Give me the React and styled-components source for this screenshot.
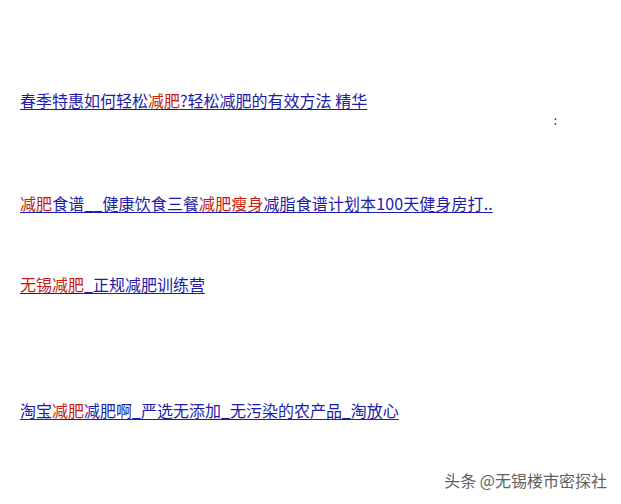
import React from "react";
import styled, { createGlobalStyle } from "styled-components";

const Global = createGlobalStyle`
  html, body {
    margin: 0;
    padding: 0;
    background: #fff;
  }
  body {
    font-family: "Noto Sans CJK SC", "Noto Sans", sans-serif;
  }
`;

const Page = styled.div`
  width: 621px;
  height: 504px;
  position: relative;
  display: flex;
  flex-direction: column;
  padding: 0 20px;
  box-sizing: border-box;
`;

const Line = styled.a`
  display: block;
  width: fit-content;
  margin-top: ${props => props.top}px;
  font-size: 16px;
  line-height: 20px;
  color: #1c1ca8;
  text-decoration: underline;
  text-underline-offset: 2px;
  letter-spacing: ${props => props.spread || 0}px;
  cursor: pointer;
`;

const Hot = styled.span`
  color: #c41a12;
`;

const Dots = styled.div`
  align-self: flex-end;
  margin-right: 44px;
  font-size: 12px;
  line-height: 12px;
  color: #1c1ca8;
  margin-top: 4px;
`;

const Mark = styled.div`
  position: absolute;
  right: 14px;
  bottom: 12px;
  font-size: 16px;
  color: #5f5f5f;
`;

export default function App() {
  return (
    <Page>
      <Global />
      <Line top={90}>
        春季特惠如何轻松<Hot>减肥</Hot>?轻松减肥的有效方法 精华
      </Line>
      <Dots>:</Dots>
      <Line top={67} spread={0.1}>
        <Hot>减肥</Hot>食谱__健康饮食三餐<Hot>减肥瘦身</Hot>减脂食谱计划本100天健身房打..
      </Line>
      <Line top={61}>
        <Hot>无锡减肥</Hot>_正规减肥训练营
      </Line>
      <Line top={106}>
        淘宝<Hot>减肥</Hot>减肥啊_严选无添加_无污染的农产品_淘放心
      </Line>
      <Mark>头条 @无锡楼市密探社</Mark>
    </Page>
  );
}
